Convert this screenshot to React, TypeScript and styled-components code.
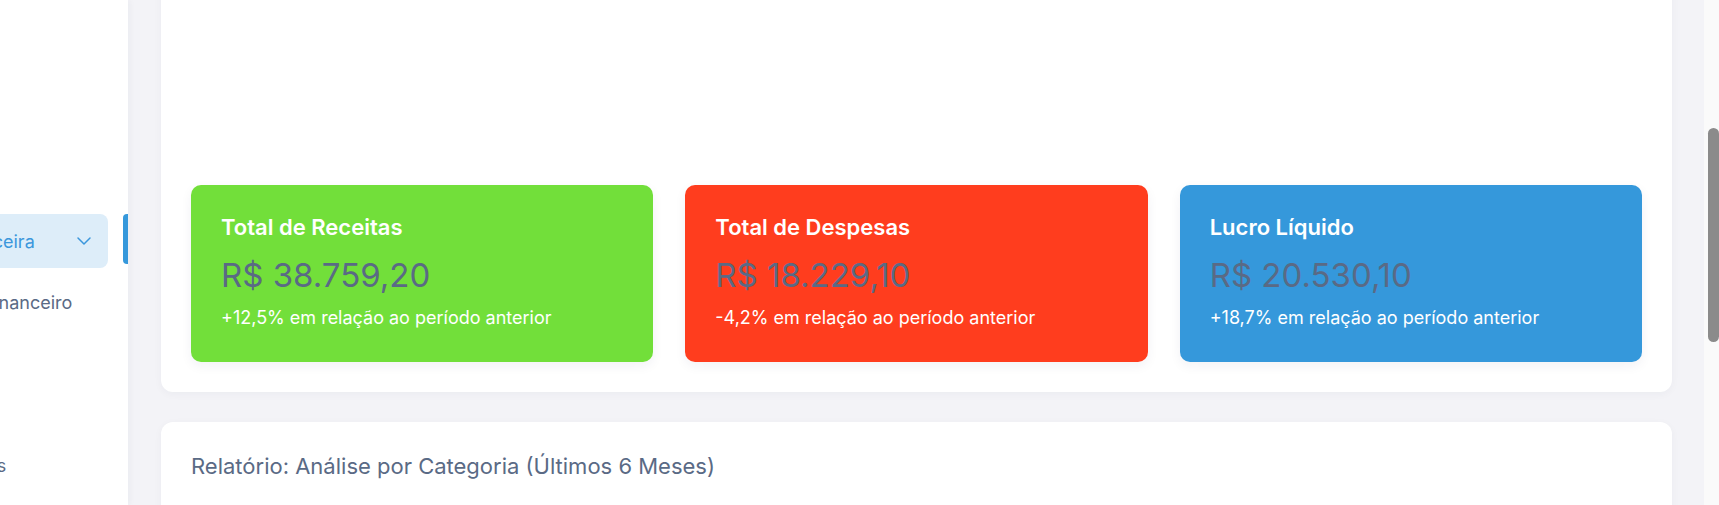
import React, { useLayoutEffect, useRef } from 'react'
import styled, { createGlobalStyle } from 'styled-components'
import { ChevronDown } from 'lucide-react'

const GlobalStyle = createGlobalStyle`
  * {
    box-sizing: border-box;
  }
  html,
  body {
    margin: 0;
    height: 100%;
    overflow: hidden;
  }
  body {
    font-family: Inter, 'Noto Sans', sans-serif;
    background: #f3f3f7;
    color: #5a6a85;
  }
`

const Layout = styled.div`
  display: flex;
  height: 100vh;
`

const Sidebar = styled.aside`
  flex: none;
  width: 128px;
  background: #fff;
  overflow: hidden;
  box-shadow: 2px 0 6px rgba(30, 40, 80, 0.04);
  z-index: 1;
`

const Menu = styled.ul`
  list-style: none;
  margin: 0 0 0 -135px;
  padding: 214px 0 0;
  width: 263px;
  display: flex;
  flex-direction: column;
  gap: 8px;
  font-size: 18px;
`

const MenuItem = styled.li<{ $active?: boolean }>`
  position: relative;
  display: flex;
  align-items: center;
  height: 54px;
  margin-right: 20px;
  padding: 0 12px 0 16px;
  border-radius: 8px;
  white-space: nowrap;
  background: ${p => (p.$active ? '#ddedf9' : 'transparent')};
  color: ${p => (p.$active ? '#3b97dc' : '#5a6a85')};
  span {
    flex: 1;
  }
  &::after {
    content: '';
    display: ${p => (p.$active ? 'block' : 'none')};
    position: absolute;
    top: 0;
    right: -20px;
    width: 5px;
    height: 50px;
    border-radius: 4px 0 0 4px;
    background: #3598db;
  }
`

const SubMenu = styled.ul`
  list-style: none;
  margin: 4px 0 0;
  padding: 0;
`

const SubItem = styled.li`
  display: flex;
  align-items: center;
  height: 44px;
  padding-left: 62px;
  white-space: nowrap;
  color: #5a6a85;
`

const Main = styled.main`
  flex: 1;
  height: 100vh;
  overflow: hidden;
  padding: 30px 32px 30px 33px;
`

const ScrollRail = styled.div`
  flex: none;
  width: 15px;
  padding: 128px 0 0 4px;
  background: #fafafa;
`

const ScrollThumb = styled.div`
  height: 214px;
  border-radius: 6px;
  background: #8b8b8b;
`

const Content = styled.div`
  display: flex;
  flex-direction: column;
  gap: 30px;
`

const Panel = styled.section`
  background: #fff;
  border-radius: 12px;
  padding: 30px;
  box-shadow: 0 2px 8px rgba(30, 40, 80, 0.04);
`

const ChartArea = styled.div<{ $height: number }>`
  height: ${p => p.$height}px;
  margin-bottom: 30px;
`

const CardGrid = styled.div`
  display: grid;
  grid-template-columns: repeat(3, 1fr);
  gap: 32px;
`

const StatCard = styled.div<{ $bg: string }>`
  background: ${p => p.$bg};
  border-radius: 10px;
  padding: 30px 30px 32px;
  color: #fff;
  box-shadow: 0 4px 12px rgba(30, 40, 80, 0.06);
`

const CardTitle = styled.h3`
  margin: 0;
  font-size: 22px;
  line-height: 24px;
  font-weight: 600;
`

const Amount = styled.div`
  margin-top: 16px;
  font-size: 33px;
  line-height: 40px;
  font-weight: 400;
  color: #5a6a85;
`

const Change = styled.p`
  margin: 11px 0 0;
  font-size: 18px;
  line-height: 24px;
`

const PanelTitle = styled.h2`
  margin: 0 0 20px;
  font-size: 22px;
  line-height: 28px;
  font-weight: 400;
  color: #5a6a85;
`

const cards = [
  { title: 'Total de Receitas', value: 'R$ 38.759,20', change: '+12,5%', bg: '#72df3a' },
  { title: 'Total de Despesas', value: 'R$ 18.229,10', change: '-4,2%', bg: '#ff3d1e' },
  { title: 'Lucro Líquido', value: 'R$ 20.530,10', change: '+18,7%', bg: '#3598db' },
]

const App: React.FC = () => {
  const mainRef = useRef<HTMLElement>(null)

  useLayoutEffect(() => {
    if (mainRef.current) mainRef.current.scrollTop = 302
  }, [])

  return (
    <>
      <GlobalStyle />
      <Layout>
        <Sidebar>
          <Menu>
            <MenuItem $active>
              <span>Gestão Financeira</span>
              <ChevronDown size={24} strokeWidth={1.5} />
            </MenuItem>
            <SubMenu>
              <SubItem>Painel Financeiro</SubItem>
              <SubItem>Metas</SubItem>
            </SubMenu>
            <MenuItem>
              <span>Clientes</span>
            </MenuItem>
            <MenuItem>
              <span>Configurações</span>
            </MenuItem>
          </Menu>
        </Sidebar>
        <Main ref={mainRef}>
          <Content>
            <Panel>
              <ChartArea $height={397} />
              <CardGrid>
                {cards.map(c => (
                  <StatCard key={c.title} $bg={c.bg}>
                    <CardTitle>{c.title}</CardTitle>
                    <Amount>{c.value}</Amount>
                    <Change>{c.change} em relação ao período anterior</Change>
                  </StatCard>
                ))}
              </CardGrid>
            </Panel>
            <Panel>
              <PanelTitle>Relatório: Análise por Categoria (Últimos 6 Meses)</PanelTitle>
              <ChartArea $height={320} />
            </Panel>
          </Content>
        </Main>
        <ScrollRail>
          <ScrollThumb />
        </ScrollRail>
      </Layout>
    </>
  )
}

export default App
